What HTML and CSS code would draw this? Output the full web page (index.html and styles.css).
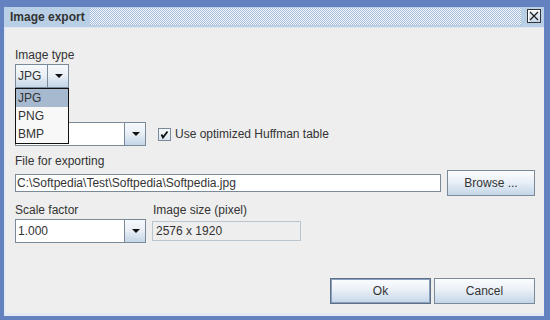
FILE: index.html
```html
<!DOCTYPE html>
<html>
<head>
<meta charset="utf-8">
<link rel="stylesheet" href="styles.css">
</head>
<body>
<div class="window">
  <div class="titlebar">
    <span class="title">Image export</span>
    <span class="bumps"></span>
    <span class="close">
      <svg width="12" height="12" viewBox="0 0 12 12"><path d="M2 2 L10 10 M10 2 L2 10" stroke="#222" stroke-width="1.3" fill="none"/></svg>
    </span>
  </div>
  <div class="content">
    <div class="label">Image type</div>
    <div class="combo combo-type">
      <div class="combo-text">JPG</div>
      <div class="combo-arrow"><span class="tri"></span></div>
      <ul class="popup">
        <li class="sel">JPG</li>
        <li>PNG</li>
        <li>BMP</li>
      </ul>
    </div>
    <div class="row row-quality">
      <div class="combo combo-edit">
        <div class="combo-text"></div>
        <div class="combo-arrow"><span class="tri"></span></div>
      </div>
      <label class="check">
        <span class="box"><svg width="11" height="11" viewBox="0 0 11 11"><path d="M2.5 5.5 L4 8.5 L8.5 2.5" stroke="#111" stroke-width="1.8" fill="none"/></svg></span>
        <span>Use optimized Huffman table</span>
      </label>
    </div>
    <div class="label label-file">File for exporting</div>
    <div class="row row-file">
      <div class="field">C:\Softpedia\Test\Softpedia\Softpedia.jpg</div>
      <button class="btn browse">Browse ...</button>
    </div>
    <div class="scale-grid">
      <div class="label">Scale factor</div>
      <div class="label label-size">Image size (pixel)</div>
      <div class="combo combo-edit">
        <div class="combo-text">1.000</div>
        <div class="combo-arrow"><span class="tri"></span></div>
      </div>
      <div class="field readonly">2576 x 1920</div>
    </div>
    <div class="actions">
      <button class="btn ok">Ok</button>
      <button class="btn">Cancel</button>
    </div>
  </div>
</div>
</body>
</html>
```
FILE: styles.css
```css
* { box-sizing: border-box; }
html, body { margin: 0; padding: 0; }
body {
  width: 550px;
  height: 320px;
  overflow: hidden;
  font-family: "Liberation Sans", Arial, sans-serif;
  font-size: 12px;
  color: #333;
}
.window {
  width: 550px;
  height: 320px;
  background: #6382bf;
  padding: 7px 6px 4px 4px;
  display: flex;
  flex-direction: column;
}
.titlebar {
  height: 20px;
  flex: none;
  background: #b8cfe5;
  display: flex;
  align-items: center;
  padding-left: 6px;
  padding-right: 3px;
}
.title {
  font-weight: bold;
  line-height: 20px;
  color: #333;
}
.bumps {
  flex: 1;
  height: 17px;
  margin: 0 6px 0 5px;
  align-self: flex-start;
  margin-top: 1px;
  background: repeating-conic-gradient(#f4f8fc 0 25%, #a4bcd9 0 50%) 0 0 / 2px 2px;
}
.close {
  width: 14px;
  height: 14px;
  border: 1px solid #333;
  background: linear-gradient(#f4f7fb, #c9d9ea);
  box-shadow: inset 1px 1px 0 #fff;
  display: flex;
  align-items: center;
  justify-content: center;
  margin-bottom: 2px;
}
.close svg { display: block; }
.content {
  flex: 1;
  background: #eeeeee;
  border-top: 1px solid #dfe7f1;
  border-left: 2px solid #e3eaf3;
  border-bottom: 3px solid #e3eaf3;
  padding: 20px 9px 9px 9px;
  display: flex;
  flex-direction: column;
  align-items: flex-start;
}
.label {
  line-height: 15px;
  white-space: nowrap;
}
.combo {
  display: flex;
  height: 24px;
  border: 1px solid #7a8a99;
  position: relative;
  background: #fff;
}
.combo-type {
  width: 54px;
  margin-top: 1px;
  background: linear-gradient(#f6f9fc, #eaf0f6 45%, #c8d8e9);
}
.combo-text {
  flex: 1;
  padding-left: 2px;
  line-height: 22px;
}
.combo-arrow {
  width: 21px;
  border-left: 1px solid #7a8a99;
  background: linear-gradient(#f6f9fc, #eaf0f6 45%, #c3d5e8);
  display: flex;
  align-items: center;
  justify-content: center;
}
.tri {
  width: 0;
  height: 0;
  border-left: 4px solid transparent;
  border-right: 4px solid transparent;
  border-top: 4px solid #111;
  margin-left: 1px;
}
.combo-edit { width: 131px; }
.popup {
  position: absolute;
  left: -1px;
  top: 23px;
  width: 54px;
  margin: 0;
  padding: 0;
  list-style: none;
  border: 1px solid #111;
  background: #f8f8f8;
  z-index: 5;
}
.popup li {
  height: 18px;
  line-height: 18px;
  padding-left: 2px;
}
.popup li.sel { background: #a6b9cf; }
.row {
  display: flex;
  align-items: center;
}
.row-quality { margin-top: 34px; }
.check {
  display: flex;
  align-items: center;
  margin-left: 12px;
}
.box {
  width: 13px;
  height: 13px;
  border: 1px solid #7a8a99;
  background: linear-gradient(#f6f9fc, #dbe6f1);
  display: flex;
  align-items: center;
  justify-content: center;
  margin-right: 4px;
}
.box svg { display: block; }
.label-file { margin-top: 8px; }
.row-file {
  margin-top: 1px;
  width: 100%;
  gap: 6px;
}
.field {
  height: 18px;
  border: 1px solid #7a8a99;
  background: #fff;
  line-height: 16px;
  padding-left: 1px;
  white-space: nowrap;
}
.row-file .field { flex: 1; }
.btn {
  font-family: "Liberation Sans", Arial, sans-serif;
  font-size: 12px;
  color: #333;
  height: 26px;
  border: 1px solid #7a8a99;
  background: linear-gradient(#fbfcfe, #edf2f8 40%, #c4d6e8);
  padding: 0;
  margin: 0;
}
.browse { width: 88px; flex: none; }
.scale-grid {
  margin-top: 7px;
  display: grid;
  grid-template-columns: 131px 149px;
  column-gap: 6px;
  row-gap: 1px;
  align-items: center;
}
.label-size { padding-left: 1px; }
.field.readonly {
  height: 20px;
  border-color: #b9c4cf;
  background: #eeeeee;
  line-height: 18px;
  padding-left: 3px;
}
.actions {
  margin-top: auto;
  align-self: flex-end;
  display: flex;
  gap: 3px;
}
.actions .btn { width: 101px; }
.btn.ok {
  border-color: #5e7088;
  box-shadow: inset 0 0 0 1px #8ba1bb;
}
```
